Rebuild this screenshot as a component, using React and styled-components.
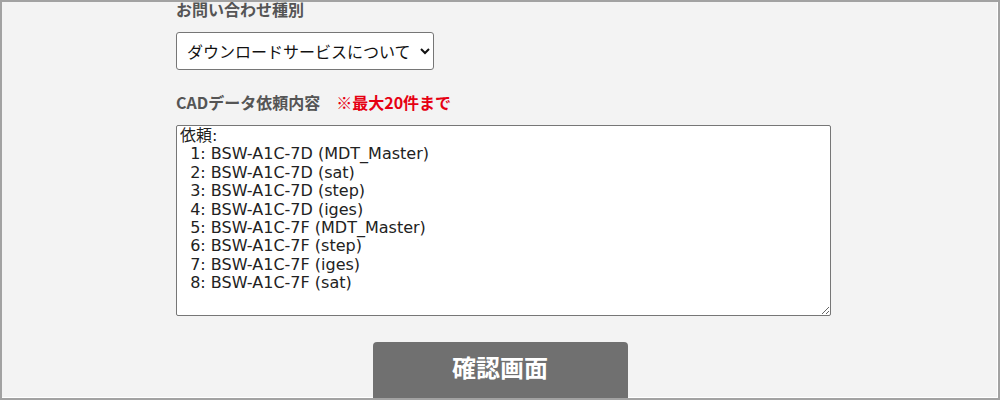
import styled, { createGlobalStyle } from "styled-components";

const GlobalStyle = createGlobalStyle`
  html, body {
    margin: 0;
    padding: 0;
    background: #f3f3f3;
  }
`;

const Frame = styled.div`
  box-sizing: border-box;
  width: 1000px;
  height: 400px;
  overflow: hidden;
  background: #f3f3f3;
  border: 2px solid #a2a2a2;
  box-shadow: inset -1px -1px 0 #fff;
  font-family: "Noto Sans CJK JP", "DejaVu Sans", sans-serif;
`;

const Form = styled.form`
  display: flex;
  flex-direction: column;
  padding: 0 0 0 174px;
  margin-top: -5px;
`;

const Label = styled.div`
  font-size: 16px;
  font-weight: 700;
  color: #555;
  line-height: 24px;
  margin-bottom: ${(p) => p.$gap || "11px"};
`;

const Note = styled.span`
  color: #e60012;
  margin-left: 16px;
`;

const Select = styled.select`
  width: 258px;
  height: 38px;
  padding: 0 6px;
  font-family: "Noto Sans CJK JP", sans-serif;
  font-size: 16px;
  color: #111;
  background: #fff;
  border: 1px solid #767676;
  border-radius: 3px;
  margin-bottom: 20px;
`;

const TextArea = styled.textarea`
  box-sizing: border-box;
  width: 655px;
  height: 191px;
  padding: 1px 3px;
  font-family: "DejaVu Sans", "Noto Sans CJK JP", sans-serif;
  font-size: 16px;
  line-height: 18.4px;
  color: #222;
  background: #fff;
  border: 1px solid #767676;
  border-radius: 2px;
  resize: both;
`;

const Actions = styled.div`
  display: flex;
  justify-content: center;
  margin: 26px 0 0 -174px;
`;

const Button = styled.button`
  width: 255px;
  height: 64px;
  border: none;
  border-radius: 4px;
  background: #707070;
  color: #fff;
  font-family: "Noto Sans CJK JP", sans-serif;
  font-size: 24px;
  font-weight: 700;
  padding-bottom: 17px;
  cursor: pointer;
`;

const items = [
  "BSW-A1C-7D (MDT_Master)",
  "BSW-A1C-7D (sat)",
  "BSW-A1C-7D (step)",
  "BSW-A1C-7D (iges)",
  "BSW-A1C-7F (MDT_Master)",
  "BSW-A1C-7F (step)",
  "BSW-A1C-7F (iges)",
  "BSW-A1C-7F (sat)",
];

const request =
  "依頼:\n" + items.map((t, i) => `  ${i + 1}: ${t}`).join("\n");

export default function App() {
  return (
    <Frame>
      <GlobalStyle />
      <Form onSubmit={(e) => e.preventDefault()}>
        <Label>お問い合わせ種別</Label>
        <Select defaultValue="download">
          <option value="download">ダウンロードサービスについて</option>
        </Select>
        <Label $gap="11px">
          CADデータ依頼内容<Note>※最大20件まで</Note>
        </Label>
        <TextArea defaultValue={request} />
        <Actions>
          <Button type="submit">確認画面</Button>
        </Actions>
      </Form>
    </Frame>
  );
}
